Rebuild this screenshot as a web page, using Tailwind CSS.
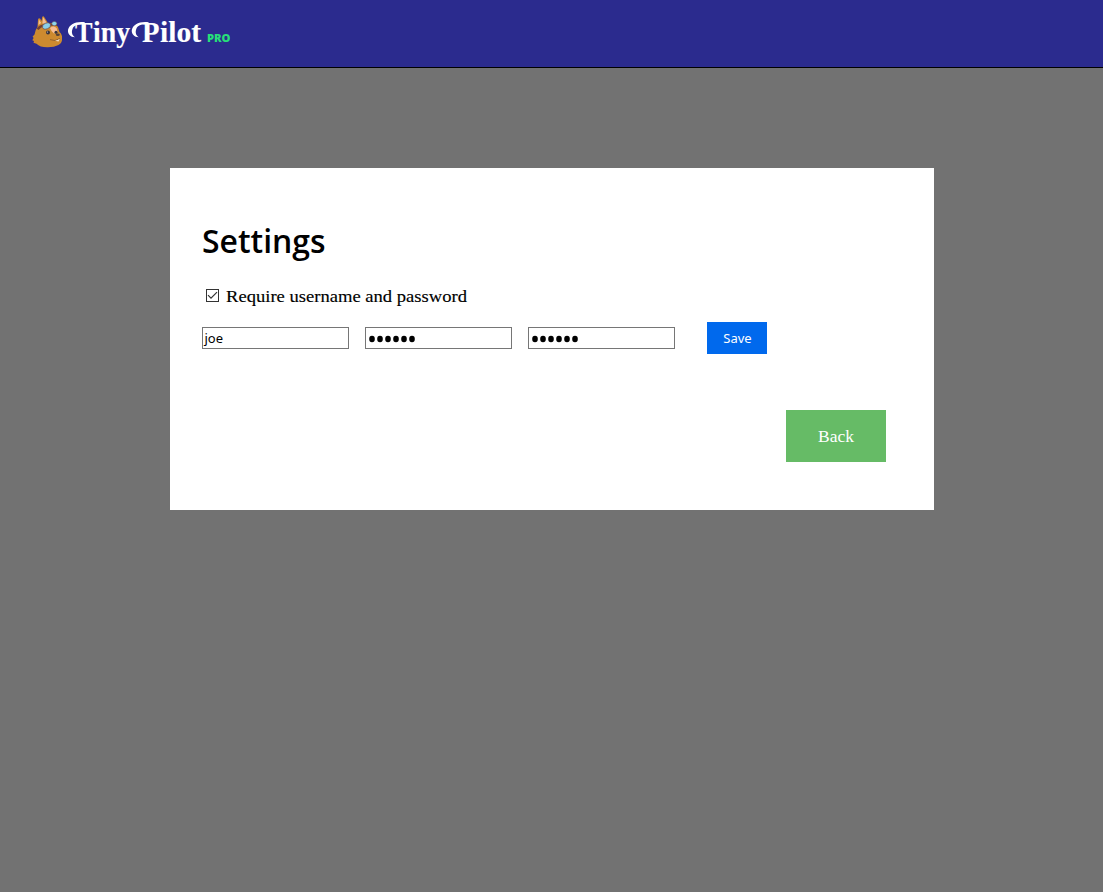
<!DOCTYPE html>
<html lang="en">
<head>
<meta charset="utf-8">
<title>TinyPilot Pro - Settings</title>
<script src="https://cdn.jsdelivr.net/npm/@tailwindcss/browser@4"></script>
</head>
<body class="min-h-screen bg-[#727272] font-['Liberation_Serif',serif] text-black">
<header class="h-[68px] border-b border-black bg-[#2b2b8e] pt-3 pl-8">
  <svg class="block" width="202" height="42" viewBox="32 12 202 42" role="img" aria-label="TinyPilot Pro">
    <path d="M37.5 27L38 19.5Q38.8 17.5 40.3 18.8L41.5 21L42.2 17Q43.2 15.5 44.5 17.5L48 23Q55 22.5 58 27L59.5 32Q62.5 34.5 62 38.5Q62.5 42.5 58.5 45Q54 47.5 47 47.3Q40 47.3 36.5 43.8L33.5 42.8L34 41L32.3 40.3L33.6 38L32.6 36.5L34.5 34.5Q35 30 37.5 27Z" fill="#cd8a2f"/>
    <path d="M38.4 25L39 19.5L41.2 23ZM42.3 23.5L43.2 17.2L46.8 23Z" fill="#f3bd93"/>
    <path d="M50 28Q54 25 56.8 28.5L57.5 32.5L54 33.5L51.5 31Z" fill="#f6bd94"/>
    <path d="M37.5 29.3Q41 25.5 44 25.5L50.5 24.5L57 24.5" fill="none" stroke="#704035" stroke-width="2.4"/>
    <ellipse cx="46.5" cy="26" rx="4.2" ry="2.9" transform="rotate(-20 46.5 26)" fill="#8ad0ea" stroke="#6c4f50" stroke-width=".7"/>
    <ellipse cx="54.3" cy="23.6" rx="2.5" ry="2.1" fill="#8bd6ee" stroke="#6c5b61" stroke-width=".5"/>
    <circle cx="48" cy="32.6" r="2" fill="#39343d"/><circle cx="56" cy="32.3" r="1.5" fill="#39343d"/>
    <circle cx="47.5" cy="32" r=".6" fill="#d8d8df"/>
    <ellipse cx="57.8" cy="34.7" rx="2" ry="1.3" fill="#554038"/>
    <path d="M50 39.6Q55 42 60 38.5" fill="none" stroke="#83552d" stroke-width=".8"/>
    <path d="M55 40.8Q58 40.5 59.8 38.8L58.5 41.5Z" fill="#f3dfc9"/>
    <g fill="#fff" stroke="#fff" stroke-width=".15" font-family="'Liberation Serif', serif" font-weight="700" font-size="29">
      <text x="75" y="41.5" textLength="17.5" lengthAdjust="spacingAndGlyphs">T</text>
      <text x="93" y="41.5" textLength="37" lengthAdjust="spacingAndGlyphs">iny</text>
      <text x="142" y="41.5" textLength="17.5" lengthAdjust="spacingAndGlyphs">P</text>
      <text x="160" y="41.5" textLength="41" lengthAdjust="spacingAndGlyphs">ilot</text>
    </g>
    <path id="swash" d="M85 22.2C76 20.8 69 24.5 68 30C67.5 34 70.5 37.2 75 37.2C72 35.5 71.3 32 72.5 29C73.6 25.8 77 24 84 24Z" fill="#fff"/>
    <use href="#swash" x="63.8"/>
    <text x="207" y="41.5" textLength="23.5" lengthAdjust="spacingAndGlyphs" fill="#27df79" font-family="'Open Sans', sans-serif" font-weight="800" font-size="10">PRO</text>
  </svg>
</header>
<main class="mx-auto mt-[100px] h-[342px] w-[764px] bg-white px-8 pt-[50px]">
  <h1 class="h-12 text-[32px] leading-[48px] font-semibold font-['Open_Sans',sans-serif]"><svg class="block overflow-visible" width="124" height="48"><text x="0" y="35" textLength="123.5" lengthAdjust="spacingAndGlyphs">Settings</text></svg></h1>
  <label class="mt-[18px] flex h-6 items-center pl-1">
    <svg class="mr-[7px] -mt-px" width="13" height="13" fill="none" stroke="#333"><rect x=".5" y=".5" width="12" height="12" fill="#fff"/><path d="M2 6.2L5 9.2L11 3.2" stroke-width="1.2"/></svg>
    <svg class="block overflow-visible" width="241" height="24"><text x="0" y="18" textLength="241" lengthAdjust="spacingAndGlyphs" font-size="17.5" stroke="#000" stroke-width=".15">Require username and password</text></svg>
  </label>
  <div class="mt-[14px] flex h-8 items-center gap-4 font-['Noto_Sans',sans-serif] text-[13px]">
    <div class="flex h-[22px] w-[147px] items-center border border-[#767676] pt-0.5 pl-[2px]">joe</div>
    <div class="flex h-[22px] w-[147px] items-center border border-[#767676] pt-0.5 pl-[3px]"><svg width="48" height="8"><g id="dots"><ellipse cx="3" cy="4" rx="2.8" ry="3.2"/><ellipse cx="11" cy="4" rx="2.8" ry="3.2"/><ellipse cx="19" cy="4" rx="2.8" ry="3.2"/><ellipse cx="27" cy="4" rx="2.8" ry="3.2"/><ellipse cx="35" cy="4" rx="2.8" ry="3.2"/><ellipse cx="43" cy="4" rx="2.8" ry="3.2"/></g></svg></div>
    <div class="flex h-[22px] w-[147px] items-center border border-[#767676] pt-0.5 pl-[3px]"><svg width="48" height="8"><use href="#dots"/></svg></div>
    <button class="ml-4 h-8 w-[60px] bg-[#0069ed] pt-0.5 pl-0.5 text-[13px] text-white">Save</button>
  </div>
  <div class="mt-14 flex justify-end pr-4">
    <button class="h-[52px] w-[100px] bg-[#66bb66] pl-px text-[17.5px] text-white">Back</button>
  </div>
</main>
</body>
</html>
